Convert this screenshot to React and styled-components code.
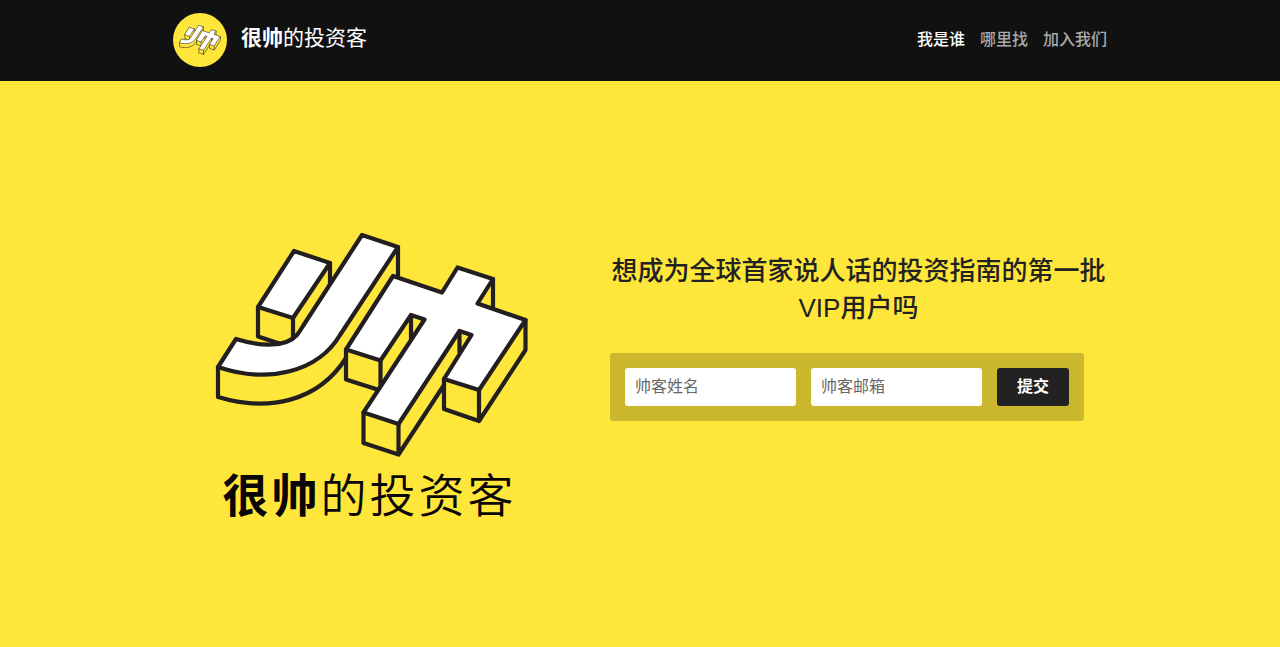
import React from "react";
import styled, { createGlobalStyle } from "styled-components";

const GlobalStyle = createGlobalStyle`
  *, *::before, *::after { box-sizing: border-box; }
  body {
    margin: 0;
    background: #ffe63b;
    color: #222;
    font-family: "Liberation Sans", "Noto Sans CJK SC", sans-serif;
    font-size: 16px;
    line-height: 24px;
  }
  b { font-weight: 700; }
`;

const Header = styled.header`
  background: #111;
  padding: 13px 0 14px;
`;

const Container = styled.div`
  width: 100%;
  max-width: 960px;
  margin: 0 auto;
  padding: 0 13px;
  display: flex;
  justify-content: space-between;
`;

const Brand = styled.a`
  display: flex;
  gap: 14px;
  color: #fff;
  font-size: 21px;
  font-weight: 400;
  line-height: 50px;
  text-decoration: none;
`;

const Badge = styled.span`
  display: flex;
  align-items: center;
  justify-content: center;
  width: 54px;
  height: 54px;
  border-radius: 50%;
  background: #ffe63b;
`;

const Nav = styled.nav`
  display: flex;
  gap: 15px;
`;

const NavLink = styled.a`
  color: ${(p) => (p.$active ? "#fff" : "#aaa")};
  font-weight: 500;
  line-height: 54px;
  text-decoration: none;
`;

const Hero = styled.main`
  padding: 152px 0 80px;
`;

const HeroRow = styled(Container)`
  gap: 40px;
  flex-wrap: wrap;
`;

const LogoColumn = styled.section`
  flex: 1 1 320px;
  display: flex;
  flex-direction: column;
  align-items: center;
`;

const Wordmark = styled.p`
  margin: 5px 0 0;
  padding-right: 4px;
  color: #0a0606;
  font-size: 46px;
  font-weight: 350;
  line-height: 64px;
  letter-spacing: 3px;
  white-space: nowrap;
`;

const SignupColumn = styled.section`
  flex: 0 1 497px;
  padding-top: 20px;
`;

const Title = styled.h1`
  margin: 0 0 26px;
  font-size: 26px;
  font-weight: 500;
  line-height: 37px;
  text-align: center;
`;

const Form = styled.form`
  display: flex;
  gap: 15px;
  max-width: 474px;
  padding: 15px;
  border-radius: 3px;
  background: #cbb82f;
`;

const Field = styled.input`
  flex: 1 1 0;
  min-width: 0;
  height: 38px;
  padding: 0 10px;
  border: 0;
  border-radius: 3px;
  background: #fff;
  color: #222;
  font: inherit;
  &::placeholder {
    color: #666;
    opacity: 1;
  }
`;

const Submit = styled.button`
  height: 38px;
  padding: 0 20px;
  border: 0;
  border-radius: 3px;
  background: #222;
  color: #fff;
  font: inherit;
  font-weight: 700;
  cursor: pointer;
`;

function LogoMark({ width, height }) {
  return (
    <svg width={width} height={height} viewBox="215 233 314 226" aria-hidden="true">
      <g fill="#ffe63b" stroke="#231f20" strokeWidth="4.2" strokeLinejoin="round" strokeLinecap="round">
        <path d="M258 307V336.5L293 348V318L330 290V263L293 318Z" stroke="none" />
        <path d="M258 307V336.5L290 347M293 318V338M330 263V286" fill="none" />
        <path d="M294 251L330 263L293 318L258 307Z" fill="#fff" />
        <path d="M398 247V276M218 367V397C268 412 318 402 346 358" fill="none" />
        <path
          d="M236 339C262 347 286 347 297 335Q300 331 303 326L362 235L398 247L340 335C318 372 268 384 218 367Z"
          fill="#fff"
        />
        <path d="M346 349.5V379.5L379 390M380.5 360.5V387" fill="none" />
        <path d="M363.5 412.5V443L398.5 454.5V424M398.5 454.5L444 385" fill="none" />
        <path d="M444 379V409L479 421V390M479 421L525.5 350V320" fill="none" />
        <path d="M493 279V307M411 315V338M459.5 331V352" fill="none" />
        <path
          d="M393 276L442 292.5L457.5 267.5L493 279L477.5 303.5L525.5 320L479 390L444 379L471.5 335L459.5 331L398.5 424L363.5 412.5L424.5 319.5L411 315L380.5 360.5L346 349.5Z"
          fill="#fff"
        />
      </g>
    </svg>
  );
}

export default function App() {
  return (
    <>
      <GlobalStyle />
      <Header>
        <Container>
          <Brand href="#">
            <Badge>
              <LogoMark width={42} height={30} />
            </Badge>
            <span>
              <b>很帅</b>的投资客
            </span>
          </Brand>
          <Nav>
            <NavLink href="#about" $active>我是谁</NavLink>
            <NavLink href="#find">哪里找</NavLink>
            <NavLink href="#join">加入我们</NavLink>
          </Nav>
        </Container>
      </Header>
      <Hero>
        <HeroRow>
          <LogoColumn>
            <LogoMark width={314} height={226} />
            <Wordmark>
              <b>很帅</b>的投资客
            </Wordmark>
          </LogoColumn>
          <SignupColumn>
            <Title>想成为全球首家说人话的投资指南的第一批VIP用户吗</Title>
            <Form onSubmit={(e) => e.preventDefault()}>
              <Field type="text" name="name" placeholder="帅客姓名" aria-label="帅客姓名" />
              <Field type="email" name="email" placeholder="帅客邮箱" aria-label="帅客邮箱" />
              <Submit type="submit">提交</Submit>
            </Form>
          </SignupColumn>
        </HeroRow>
      </Hero>
    </>
  );
}
